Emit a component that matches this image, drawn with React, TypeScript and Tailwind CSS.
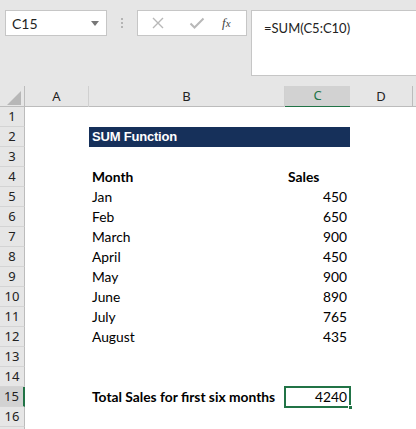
import React from 'react';

const rows: { b?: string; c?: string; bold?: boolean; title?: boolean; left?: boolean }[] = [
  {},
  { b: 'SUM Function', title: true },
  {},
  { b: 'Month', c: 'Sales', bold: true, left: true },
  { b: 'Jan', c: '450' },
  { b: 'Feb', c: '650' },
  { b: 'March', c: '900' },
  { b: 'April', c: '450' },
  { b: 'May', c: '900' },
  { b: 'June', c: '890' },
  { b: 'July', c: '765' },
  { b: 'August', c: '435' },
  {},
  {},
  { b: 'Total Sales for first six months', c: '4240', bold: true },
  {},
  {},
];

const cellFont = { fontFamily: 'Lato, "Liberation Sans", sans-serif' };
const uiFont = { fontFamily: '"Noto Sans", "Liberation Sans", sans-serif' };

export default function App() {
  return (
    <div className="w-[416px] h-[429px] overflow-hidden bg-[#e6e6e6] flex flex-col">
      {/* formula bar area */}
      <div className="h-[86px] shrink-0 flex items-start pt-[10px] pl-[5px]">
        <div className="w-[102px] h-[26px] bg-white border border-[#c6c6c6] flex items-center justify-between pl-[6px] pr-[7px]">
          <span className="text-[14px] text-[#222]" style={cellFont}>C15</span>
          <svg width="8" height="5" viewBox="0 0 8 5"><path d="M0 0h8L4 5z" fill="#777" /></svg>
        </div>
        <div className="w-[30px] h-[26px] flex flex-col items-center justify-center gap-[2px]">
          <span className="w-[2px] h-[2px] bg-[#b4b4b4]" />
          <span className="w-[2px] h-[2px] bg-[#b4b4b4]" />
          <span className="w-[2px] h-[2px] bg-[#b4b4b4]" />
        </div>
        <div className="w-[110px] h-[26px] bg-white border border-[#c6c6c6] flex items-center pl-[13px]">
          <svg width="14" height="14" viewBox="0 0 14 14"><path d="M2 2l10 10M12 2L2 12" stroke="#b8b8b8" strokeWidth="1.4" /></svg>
          <svg className="ml-[24px]" width="16" height="14" viewBox="0 0 16 14"><path d="M1.5 7.5l4 4 9-9" fill="none" stroke="#b8b8b8" strokeWidth="2" /></svg>
          <span className="ml-[17px] text-[13px] italic text-[#444]" style={{ fontFamily: '"Liberation Serif", serif' }}>
            f<span className="text-[11px]">x</span>
          </span>
        </div>
        <div className="ml-[4px] flex-1 h-[66px] bg-white border border-[#c6c6c6] border-r-0 pl-[12px] pt-[4px]">
          <span className="text-[13px] text-[#222]" style={cellFont}>=SUM(C5:C10)</span>
        </div>
      </div>

      {/* column headers */}
      <div className="shrink-0 grid grid-cols-[25px_64px_196px_65px_63px_1fr] h-[21px] border-b border-[#bcbcbc] text-[13px] text-[#222]" style={uiFont}>
        <div className="border-r border-[#bcbcbc] flex items-end justify-end pr-[3px] pb-[3px]">
          <svg width="14" height="14" viewBox="0 0 14 14"><path d="M14 0v14H0z" fill="#b7b7b7" /></svg>
        </div>
        <div className="border-r border-[#d0d0d0] flex items-center justify-center">A</div>
        <div className="border-r border-[#d0d0d0] flex items-center justify-center">B</div>
        <div className="bg-[#d2d2d2] border-b-2 border-[#217346] flex items-center justify-center text-[#217346]">C</div>
        <div className="border-r border-[#bcbcbc] flex items-center justify-center">D</div>
        <div />
      </div>

      {/* sheet */}
      <div className="grid grid-cols-[25px_64px_196px_65px_1fr] content-start flex-1 bg-white" style={cellFont}>
        {rows.map((r, i) => {
          const n = i + 1;
          const sel = n === 15;
          return (
            <React.Fragment key={n}>
              <div
                className={`h-[20px] flex items-center justify-center text-[13px] text-[#222] border-b border-[#d4d4d4] ${
                  sel ? 'bg-[#d2d2d2] border-r-2 border-r-[#217346]' : 'bg-[#e6e6e6] border-r border-r-[#bcbcbc]'
                }`}
                style={uiFont}
              >
                {n < 17 ? n : ''}
              </div>
              <div className="h-[20px]" />
              <div
                className={`h-[20px] flex items-center pl-[3px] text-[13.8px] text-black whitespace-nowrap ${r.title ? 'bg-[#16305a]' : ''} ${
                  r.bold ? 'font-bold' : ''
                }`}
              >
                {r.title ? (
                  <span className="text-white font-bold text-[13px] tracking-[-0.2px]" style={{ fontFamily: '"Liberation Sans", sans-serif' }}>
                    {r.b}
                  </span>
                ) : (
                  r.b
                )}
              </div>
              <div
                className={`relative h-[20px] flex items-center text-[13.8px] text-black ${r.title ? 'bg-[#16305a]' : ''} ${
                  r.left ? 'justify-start pl-[3px]' : 'justify-end pr-[3px]'
                } ${r.bold ? 'font-bold' : ''}`}
              >
                {sel ? <span className="font-normal">{r.c}</span> : r.c}
                {sel && (
                  <>
                    <div className="absolute left-[-1px] top-[-1px] right-[-1px] bottom-[-1px] border-2 border-[#217346]" />
                    <div className="absolute right-[-3px] bottom-[-3px] w-[5px] h-[5px] bg-[#217346] border border-white" />
                  </>
                )}
              </div>
              <div className="h-[20px]" />
            </React.Fragment>
          );
        })}
      </div>
    </div>
  );
}
